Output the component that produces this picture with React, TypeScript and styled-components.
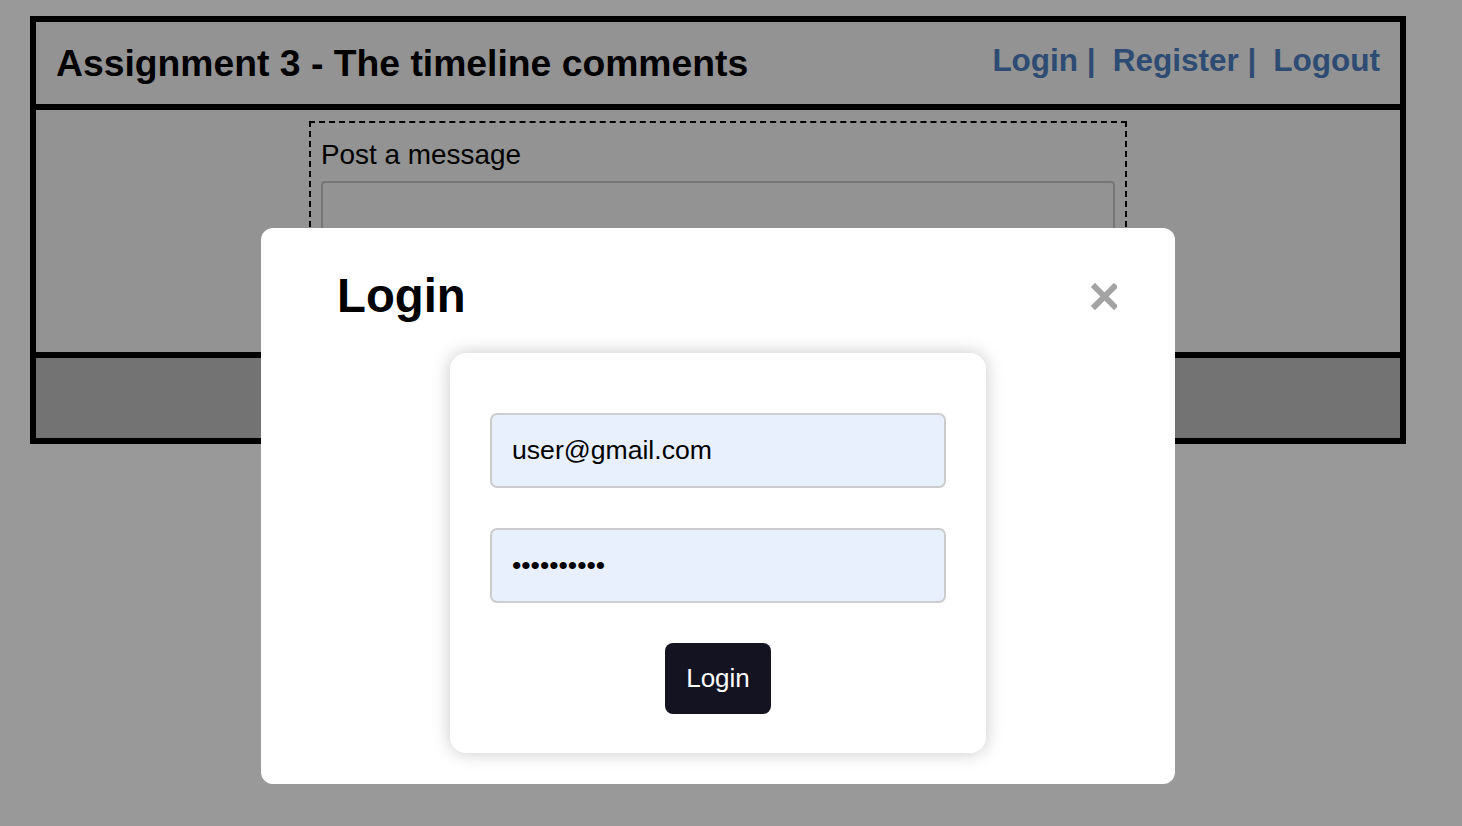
import React from "react";
import styled, { createGlobalStyle } from "styled-components";

const Global = createGlobalStyle`
  html, body { margin: 0; padding: 0; background: #ffffff; }
  body { font-family: "Liberation Sans", Arial, sans-serif; color: #000; }
`;

const Page = styled.div`
  padding: 16px 0 0 30px;
`;

const Container = styled.div`
  width: 1364px;
  border: 6px solid #000;
  display: flex;
  flex-direction: column;
`;

const Header = styled.header`
  height: 88px;
  box-sizing: border-box;
  background: #f5f5f5;
  border-bottom: 6px solid #000;
  display: flex;
  align-items: center;
  justify-content: space-between;
  padding: 0 20px 0 20px;
`;

const Title = styled.h1`
  margin: 0;
  font-size: 37.3px;
  font-weight: 700;
`;

const Nav = styled.nav`
  display: flex;
  gap: 17px;
  margin-top: -6px;
`;

const NavLink = styled.a`
  font-size: 31.5px;
  font-weight: 700;
  color: #4d7fc0;
  text-decoration: none;
`;

const Main = styled.main`
  height: 248px;
  background: #f5f5f5;
  border-bottom: 6px solid #000;
  display: flex;
  justify-content: center;
  padding-top: 11px;
  box-sizing: border-box;
`;

const PostBox = styled.section`
  width: 818px;
  height: 226px;
  box-sizing: border-box;
  border: 2px dashed #000;
  padding: 15px 10px;
  display: flex;
  flex-direction: column;
  gap: 9px;
`;

const PostLabel = styled.div`
  font-size: 27.9px;
  line-height: 34px;
`;

const TextArea = styled.div`
  height: 120px;
  border: 2px solid #c4c4c4;
  border-radius: 4px;
  background: #f5f5f5;
`;

const Footer = styled.footer`
  height: 80px;
  background: #c0c0c0;
`;

const Overlay = styled.div`
  position: fixed;
  inset: 0;
  background: rgba(0, 0, 0, 0.4);
  padding: 228px 0 0 261px;
  box-sizing: border-box;
`;

const Modal = styled.div`
  width: 914px;
  height: 556px;
  background: #fff;
  border-radius: 12px;
  box-sizing: border-box;
  padding: 40px 58px 31px 76px;
  display: flex;
  flex-direction: column;
`;

const ModalHead = styled.div`
  display: flex;
  align-items: center;
  justify-content: space-between;
  height: 56px;
`;

const ModalTitle = styled.h2`
  margin: 0;
  font-size: 47.3px;
  font-weight: 700;
  margin-top: -2px;
`;

const CloseBtn = styled.button`
  border: 0;
  background: none;
  padding: 0;
  width: 28px;
  height: 28px;
  display: flex;
  cursor: pointer;
`;

const Card = styled.form`
  margin: 29px auto 0 113px;
  width: 536px;
  height: 400px;
  box-sizing: border-box;
  background: #fff;
  border-radius: 16px;
  box-shadow: 0 0 18px rgba(0, 0, 0, 0.22);
  padding: 60px 40px 39px;
  display: flex;
  flex-direction: column;
  align-items: center;
  gap: 40px;
`;

const Field = styled.input`
  width: 456px;
  height: 75px;
  box-sizing: border-box;
  border: 2px solid #cccccc;
  border-radius: 7px;
  background: #e8f0fe;
  padding: 0 20px;
  font-family: "Liberation Sans", Arial, sans-serif;
  font-size: 26.6px;
  color: #000;
  outline: none;
`;

const SubmitBtn = styled.button`
  width: 106px;
  height: 71px;
  border: 0;
  border-radius: 8px;
  background: #141322;
  color: #fff;
  font-family: "Liberation Sans", Arial, sans-serif;
  font-size: 26px;
  cursor: pointer;
`;

export default function App() {
  return (
    <>
      <Global />
      <Page>
        <Container>
          <Header>
            <Title>Assignment 3 - The timeline comments</Title>
            <Nav>
              <NavLink href="#">Login |</NavLink>
              <NavLink href="#">Register |</NavLink>
              <NavLink href="#">Logout</NavLink>
            </Nav>
          </Header>
          <Main>
            <PostBox>
              <PostLabel>Post a message</PostLabel>
              <TextArea />
            </PostBox>
          </Main>
          <Footer />
        </Container>
      </Page>
      <Overlay>
        <Modal>
          <ModalHead>
            <ModalTitle>Login</ModalTitle>
            <CloseBtn type="button" aria-label="Close">
              <svg width="28" height="28" viewBox="0 0 28 28">
                <path d="M6 5 L25 24 M25 5 L6 24" stroke="#a3a3a3" strokeWidth="6" strokeLinecap="square" />
              </svg>
            </CloseBtn>
          </ModalHead>
          <Card onSubmit={(e) => e.preventDefault()}>
            <Field type="email" defaultValue="user@gmail.com" />
            <Field type="password" defaultValue="1234567890" />
            <SubmitBtn type="submit">Login</SubmitBtn>
          </Card>
        </Modal>
      </Overlay>
    </>
  );
}
